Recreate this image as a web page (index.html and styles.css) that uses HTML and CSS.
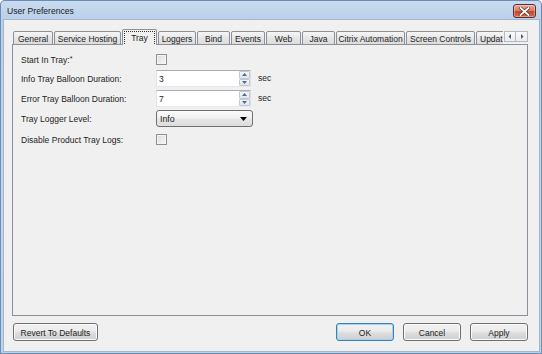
FILE: index.html
```html
<!DOCTYPE html>
<html>
<head>
<meta charset="utf-8">
<link rel="stylesheet" href="styles.css">
</head>
<body>
<div class="window">
  <div class="titlebar">
    <span class="title">User Preferences</span>
    <div class="close">
      <svg width="11" height="9" viewBox="0 0 11 9"><path d="M1.5 1 L9.5 8 M9.5 1 L1.5 8" stroke="#5a2a22" stroke-width="3.2" stroke-linecap="square"/><path d="M1.5 1 L9.5 8 M9.5 1 L1.5 8" stroke="#fff" stroke-width="1.8" stroke-linecap="square"/></svg>
    </div>
  </div>
  <div class="client">
    <div class="tabstrip">
      <div class="tabs">
        <div class="tab t-general">General</div>
        <div class="tab t-service">Service Hosting</div>
        <div class="tab active t-tray"><span class="focus">Tray</span></div>
        <div class="tab t-loggers">Loggers</div>
        <div class="tab t-bind">Bind</div>
        <div class="tab t-events">Events</div>
        <div class="tab t-web">Web</div>
        <div class="tab t-java">Java</div>
        <div class="tab t-citrix">Citrix Automation</div>
        <div class="tab t-screen">Screen Controls</div>
        <div class="tab t-update">Updat</div>
      </div>
      <div class="tabscroll">
        <span class="sbtn"><svg width="4" height="5" viewBox="0 0 4 5"><path d="M3 0 L0.5 2.5 L3 5 Z" fill="#3d5a8c"/></svg></span>
        <span class="sbtn"><svg width="4" height="5" viewBox="0 0 4 5"><path d="M1 0 L3.5 2.5 L1 5 Z" fill="#3d5a8c"/></svg></span>
      </div>
    </div>
    <div class="panel">
      <div class="row row-check">
        <span class="label">Start In Tray:<sup class="star">*</sup></span>
        <span class="check"></span>
      </div>
      <div class="row row-field gap-a">
        <span class="label">Info Tray Balloon Duration:</span>
        <div class="spin">
          <span class="spin-value">3</span>
          <span class="spin-btns">
            <span class="spin-btn"><svg width="5" height="3" viewBox="0 0 5 3"><path d="M0 3 L2.5 0 L5 3 Z" fill="#4a6a9a"/></svg></span>
            <span class="spin-btn"><svg width="5" height="3" viewBox="0 0 5 3"><path d="M0 0 L2.5 3 L5 0 Z" fill="#4a6a9a"/></svg></span>
          </span>
        </div>
        <span class="unit">sec</span>
      </div>
      <div class="row row-field gap-b">
        <span class="label">Error Tray Balloon Duration:</span>
        <div class="spin">
          <span class="spin-value">7</span>
          <span class="spin-btns">
            <span class="spin-btn"><svg width="5" height="3" viewBox="0 0 5 3"><path d="M0 3 L2.5 0 L5 3 Z" fill="#4a6a9a"/></svg></span>
            <span class="spin-btn"><svg width="5" height="3" viewBox="0 0 5 3"><path d="M0 0 L2.5 3 L5 0 Z" fill="#4a6a9a"/></svg></span>
          </span>
        </div>
        <span class="unit">sec</span>
      </div>
      <div class="row row-field gap-b">
        <span class="label">Tray Logger Level:</span>
        <div class="combo">
          <span class="combo-value">Info</span>
          <svg width="7" height="4" viewBox="0 0 7 4"><path d="M0 0 L7 0 L3.5 4 Z" fill="#000"/></svg>
        </div>
      </div>
      <div class="row row-check gap-c">
        <span class="label">Disable Product Tray Logs:</span>
        <span class="check"></span>
      </div>
    </div>
    <div class="footer">
      <button class="btn btn-revert">Revert To Defaults</button>
      <div class="spacer"></div>
      <button class="btn btn-default">OK</button>
      <button class="btn">Cancel</button>
      <button class="btn">Apply</button>
    </div>
  </div>
</div>
</body>
</html>
```

FILE: styles.css
```css
* { box-sizing: border-box; }
html, body { margin: 0; padding: 0; }
body {
  width: 542px;
  height: 354px;
  overflow: hidden;
  font-family: "Liberation Sans", Arial, sans-serif;
  font-size: 8.5px;
  color: #1c1c1c;
  background: #fff;
}
.window {
  width: 542px;
  height: 354px;
  display: flex;
  flex-direction: column;
  padding: 0 3px 3px 4px;
  background: linear-gradient(#cadcf0 0, #b9d0ea 20px, #c1d6ee 60%, #bcd3ec 100%);
  box-shadow: inset 0 0 0 1px #6f8db0;
  border-radius: 5px 5px 0 0;
}
.titlebar {
  height: 20px;
  display: flex;
  align-items: center;
  padding-left: 3px;
  padding-right: 3px;
}
.title {
  flex: 1;
  font-size: 8.6px;
  color: #1a1a1a;
  padding-top: 1px;
}
.close {
  width: 23px;
  height: 14px;
  margin-top: 2px;
  border: 1px solid #5b2e28;
  border-radius: 3px;
  background: linear-gradient(#e9a99a 0, #d97e6a 45%, #c8452c 55%, #d46a4f 100%);
  display: flex;
  align-items: center;
  justify-content: center;
  box-shadow: inset 0 0 0 1px rgba(255,255,255,0.35);
}
.client {
  flex: 1;
  display: flex;
  flex-direction: column;
  background: #f0f0f0;
  padding: 9px 11px 10px 8px;
  box-shadow: 0 0 0 1px #a3b6cc;
}
.tabstrip {
  display: flex;
  height: 15px;
  position: relative;
  z-index: 1;
}
.tabs {
  flex: 1;
  display: flex;
  align-items: flex-end;
  height: 16px;
  overflow: hidden;
  padding-left: 1px;
}
.tab {
  flex: none;
  height: 14px;
  margin-right: 1px;
  border: 1px solid #8d9099;
  border-radius: 2px 2px 0 0;
  background: linear-gradient(#f6f6f6, #e6e6e6 50%, #dcdcdc);
  display: flex;
  align-items: center;
  justify-content: center;
  padding-top: 1px;
  white-space: nowrap;
}
.tab.active {
  height: 16px;
  background: #f0f0f0;
  border-bottom: none;
  padding-top: 0;
  align-items: flex-start;
}
.focus {
  margin-top: 1px;
  padding: 1px 6px 2px;
  border: 1px dotted #333;
}
.t-general { width: 40px; }
.t-service { width: 67px; }
.t-tray { width: 35px; }
.t-loggers { width: 38px; }
.t-bind { width: 33px; }
.t-events { width: 34px; }
.t-web { width: 35px; }
.t-java { width: 33px; }
.t-citrix { width: 69px; }
.t-screen { width: 69px; }
.t-update { width: 34px; justify-content: flex-start; padding-left: 3px; }
.tabscroll {
  display: flex;
  align-self: flex-start;
  margin-top: 2px;
  margin-left: 1px;
}
.sbtn {
  width: 12px;
  height: 11px;
  border: 1px solid #b5b8c0;
  background: linear-gradient(#fbfbfb, #ebebeb);
  display: flex;
  align-items: center;
  justify-content: center;
}
.sbtn + .sbtn { border-left: none; }
.panel {
  height: 272px;
  border: 1px solid #8d9099;
  background: #f0f0f0;
  padding: 9px 0 0 8px;
  display: flex;
  flex-direction: column;
}
.row {
  display: flex;
  align-items: center;
}
.row-check { height: 11px; }
.row-field { height: 17px; }
.gap-a { margin-top: 5px; }
.gap-b { margin-top: 3px; }
.gap-c { margin-top: 7px; }
.label {
  width: 135px;
  flex: none;
  padding-top: 1px;
}
.star {
  font-size: 7px;
  line-height: 0;
  vertical-align: 2px;
}
.check {
  width: 11px;
  height: 11px;
  border: 1px solid #8e8f8f;
  background: linear-gradient(135deg, #dcdcdc, #f6f6f6);
  box-shadow: inset 0 0 0 1px #f4f4f4;
}
.spin {
  width: 95px;
  height: 17px;
  border: 1px solid #abadb3;
  border-color: #abadb3 #dbdfe6 #e3e9ef #e2e3ea;
  background: #fff;
  display: flex;
  align-items: stretch;
}
.spin-value {
  flex: 1;
  display: flex;
  align-items: center;
  padding-left: 2px;
  padding-top: 1px;
}
.spin-btns {
  width: 11px;
  display: flex;
  flex-direction: column;
}
.spin-btn {
  flex: 1;
  border: 1px solid #c4c8d0;
  border-radius: 1px;
  background: linear-gradient(#f4f6f9, #e0e5ec);
  display: flex;
  align-items: center;
  justify-content: center;
}
.unit {
  margin-left: 7px;
  margin-top: -2px;
}
.combo {
  width: 97px;
  height: 17px;
  border: 1px solid #707070;
  border-radius: 3px;
  background: linear-gradient(#fafafa 0, #f1f1f1 45%, #e6e6e6 55%, #dcdcdc 100%);
  display: flex;
  align-items: center;
  padding: 1px 5px 0 3px;
}
.combo-value { flex: 1; font-size: 8.8px; }
.combo svg { margin-top: -1px; }
.footer {
  display: flex;
  margin-top: 7px;
  height: 18px;
}
.spacer { flex: 1; }
.btn {
  font-family: "Liberation Sans", Arial, sans-serif;
  font-size: 8.5px;
  color: #1c1c1c;
  width: 58px;
  height: 18px;
  padding: 1px 0 0;
  margin: 0 0 0 9px;
  border: 1px solid #707070;
  border-radius: 3px;
  background: linear-gradient(#f2f2f2 0, #ebebeb 45%, #dddddd 55%, #cfcfcf 100%);
  box-shadow: inset 0 0 0 1px #fafafa;
}
.btn-revert {
  width: 85px;
  margin-left: 1px;
}
.btn-default {
  border-color: #3c7fb1;
  box-shadow: inset 0 0 0 1px #9fd5f5;
}
```
